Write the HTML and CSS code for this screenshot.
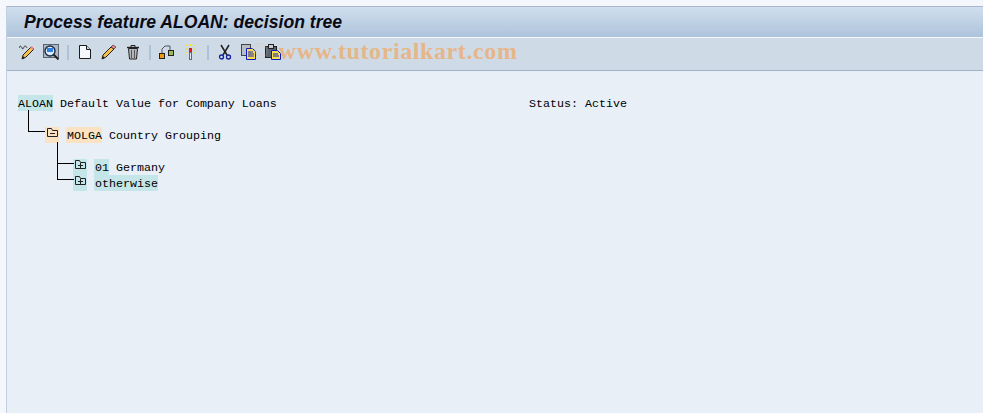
FILE: index.html
```html
<html>
<head>
  <link rel="stylesheet" href="styles.css">
</head>

<body>
<div class="window">

  <div class="titleBar">
    <h1>Process feature ALOAN: decision tree</h1>
  </div>

  <div class="toolBar">
    <svg class="icon" viewBox="0 0 16 16">
      <path d="M0 4c1-3 2-2 3 0s1 1 2-1 2-1 3 1" fill="none" stroke="#333"/>
      <path d="M3 15l1-4 8-8 3 2-8 8z" fill="#f7c04a" stroke="#222"/>
      <path d="M11 4l3 2 1-1-2-3z" fill="#e88"/>
      <path d="M3 15l1-3 2 2z" fill="#222"/>
    </svg>
    <svg class="icon" viewBox="0 0 16 16">
      <rect x="0.5" y="0.5" width="15" height="13" fill="#aeb8c4" stroke="#5a6470"/>
      <circle cx="7" cy="7" r="5" fill="#d8ecfa" stroke="#1c2c44" stroke-width="1.4"/>
      <rect x="4" y="4" width="6" height="4" fill="#2f7fe0"/>
      <path d="M10.500 10.500l5 5" stroke="#222" stroke-width="2"/>
    </svg>
    <span class="sep"></span>
    <svg class="icon" viewBox="0 0 16 16">
      <path d="M2.500 1.500h7l4 4v9h-11z" fill="#f4f8fd" stroke="#1c1c1c"/>
      <path d="M9.500 1.500v4h4" fill="#c9d8ea" stroke="#1c1c1c"/>
    </svg>
    <svg class="icon" viewBox="0 0 16 16">
      <path d="M1 15l1-4 8-8 3 2-8 8z" fill="#f7c04a" stroke="#222"/>
      <path d="M10 3l2-2 3 2-2 2z" fill="#e88" stroke="#222" stroke-width=".6"/>
      <path d="M1 15l1-3 2 2z" fill="#222"/>
    </svg>
    <svg class="icon" viewBox="0 0 16 16">
      <path d="M2 3.500h12" stroke="#222" stroke-width="1.400"/>
      <path d="M6 3V1.500h4V3" fill="none" stroke="#222"/>
      <path d="M3.500 4.500l1 10.500h7l1-10.500z" fill="#b4b8bc" stroke="#222"/>
      <path d="M6.500 6v8M9.500 6v8" stroke="#555"/>
    </svg>
    <span class="sep"></span>
    <svg class="icon" viewBox="0 0 16 16">
      <rect x=".5" y="9.500" width="5" height="5" fill="#f09a10" stroke="#222"/>
      <rect x="9.500" y="6.500" width="5" height="5" fill="#9ab858" stroke="#222"/>
      <path d="M3 9V5l3-3h5v4" fill="none" stroke="#333" stroke-width=".8"/>
    </svg>
    <svg class="icon" viewBox="0 0 16 16">
      <path d="M3 1l2 2M12 1l-2 2M2 5h3M10 5h3M3 9l2-2M12 9l-2-2M7.500 0v2" stroke="#f0e020"/>
      <rect x="6.500" y="8" width="2" height="8" fill="#e4e8f0" stroke="#667"/>
      <rect x="6" y="4" width="3" height="4" fill="#e01818"/>
    </svg>
    <span class="sep"></span>
    <svg class="icon" viewBox="0 0 16 16">
      <path d="M4 1l6 10M12 1L6 11" stroke="#222" stroke-width="1.500"/>
      <circle cx="4.500" cy="13" r="2" fill="none" stroke="#1020a0" stroke-width="1.300"/>
      <circle cx="11.500" cy="13" r="2" fill="none" stroke="#1020a0" stroke-width="1.300"/>
    </svg>
    <svg class="icon" viewBox="0 0 16 16">
      <rect x=".5" y=".5" width="9" height="11" fill="#b8bcc4" stroke="#444"/>
      <path d="M5.500 4.500h6l3 3v8h-9z" fill="#f6e04a" stroke="#1018c0"/>
      <path d="M7 8h5M7 10h6M7 12h6" stroke="#1018c0"/>
    </svg>
    <svg class="icon" viewBox="0 0 16 16">
      <rect x=".5" y="2.500" width="11" height="11" fill="#5a6474" stroke="#222"/>
      <rect x="3.500" y=".5" width="5" height="4" fill="#c8ccd4" stroke="#222"/>
      <path d="M6.500 6.500h6l3 3v6h-9z" fill="#f6e04a" stroke="#1018c0"/>
      <path d="M8 10h5M8 12h6" stroke="#1018c0"/>
    </svg>
  </div>

  <div class="watermark"><span class="copyMark">©</span>www.tutorialkart.com</div>

  <div class="tree">
    <div class="line">
      <span class="name"><span class="key">ALOAN</span> Default Value for Company Loans</span>
      <span>Status: Active</span>
    </div>
    <div class="line"></div>
    <div class="line levelOne">
      <span class="connector connectorOne"></span>
      <span class="node nodeOrange">
        <svg class="folder" viewBox="0 0 11 10">
          <path d="M.5 8.500V.5h4l1 2h5v6z" fill="none" stroke="#222"/>
          <path d="M3 5.500h5" stroke="#222"/>
        </svg>
      </span>
      <span class="value"><span class="field">MOLGA</span> Country Grouping</span>
    </div>
    <div class="line"></div>
    <div class="line levelTwo">
      <span class="connector connectorTwo"></span>
      <span class="node nodeTeal">
        <svg class="folder" viewBox="0 0 11 10">
          <path d="M.5 8.500V.5h4l1 2h5v6z" fill="none" stroke="#222"/>
          <path d="M3 5.500h5M5.500 3v5" stroke="#222"/>
        </svg>
      </span>
      <span class="value"><span class="key">01</span> Germany</span>
    </div>
    <div class="line levelTwo">
      <span class="connector connectorThree"></span>
      <span class="node nodeTeal">
        <svg class="folder" viewBox="0 0 11 10">
          <path d="M.5 8.500V.5h4l1 2h5v6z" fill="none" stroke="#222"/>
          <path d="M3 5.500h5M5.500 3v5" stroke="#222"/>
        </svg>
      </span>
      <span class="value"><span class="key">otherwise</span></span>
    </div>
  </div>

</div>
</body>
</html>
```

FILE: styles.css
```css
html, body {margin:0px;padding:0px;height:100%;overflow:hidden;background:#f4f7fb;}
body {padding:6px 0px 0px 6px;box-sizing:border-box;}

.window {position:relative;height:100%;background:#e8eff7;border-top:1px solid #a9b6cd;border-left:1px solid #c3cede;}

.titleBar {height:30px;display:flex;align-items:center;padding-left:17px;background:linear-gradient(#d0dfee,#adc3db);border-bottom:1px solid #f4f8fc;}
.titleBar h1 {margin:0px;font-family:"Liberation Sans",sans-serif;font-size:17.6px;font-weight:bold;font-style:italic;color:#0a0a14;}

.toolBar {height:28px;padding-bottom:4px;display:flex;align-items:center;gap:8px;padding-left:12px;background:#cedbe7;border-bottom:1px solid #a3b1c8;}
.icon {width:16px;height:16px;flex:none;}
.sep {width:2px;height:15px;background:#aec1d8;flex:none;}

.watermark {position:absolute;left:243px;top:31px;font-family:"Liberation Serif",serif;font-size:24px;font-weight:bold;color:#e6b689;white-space:nowrap;letter-spacing:.6px;}
.copyMark {font-weight:normal;opacity:.3;margin-right:10px;}

.tree {padding:24px 0px 0px 11px;font-family:"Liberation Mono",monospace;font-size:11.67px;color:#000;}
.line {position:relative;height:16px;line-height:18px;display:flex;white-space:pre;}
.name {width:511px;}

.levelOne {padding-left:27px;}
.levelTwo {padding-left:55px;}

.key {background:#c4e6e8;display:inline-block;height:16px;}
.field {background:#fbe2c3;display:inline-block;height:16px;}
.value {margin-left:7px;padding-left:1px;}
.value .key, .value .field {margin-left:-1px;padding-left:1px;}
.node {width:14px;height:16px;display:flex;justify-content:center;padding-top:1px;box-sizing:border-box;}
.nodeOrange {background:#fbe2c3;}
.nodeTeal {background:#c4e6e8;}
.folder {width:11px;height:10px;}

.connector {position:absolute;border-left:1px solid #000;border-bottom:1px solid #000;}
.connectorOne {left:10px;width:16px;top:-17px;height:21px;}
.connectorTwo {left:39px;width:16px;top:-17px;height:21px;}
.connectorThree {left:39px;width:16px;top:-12px;height:16px;}
```
